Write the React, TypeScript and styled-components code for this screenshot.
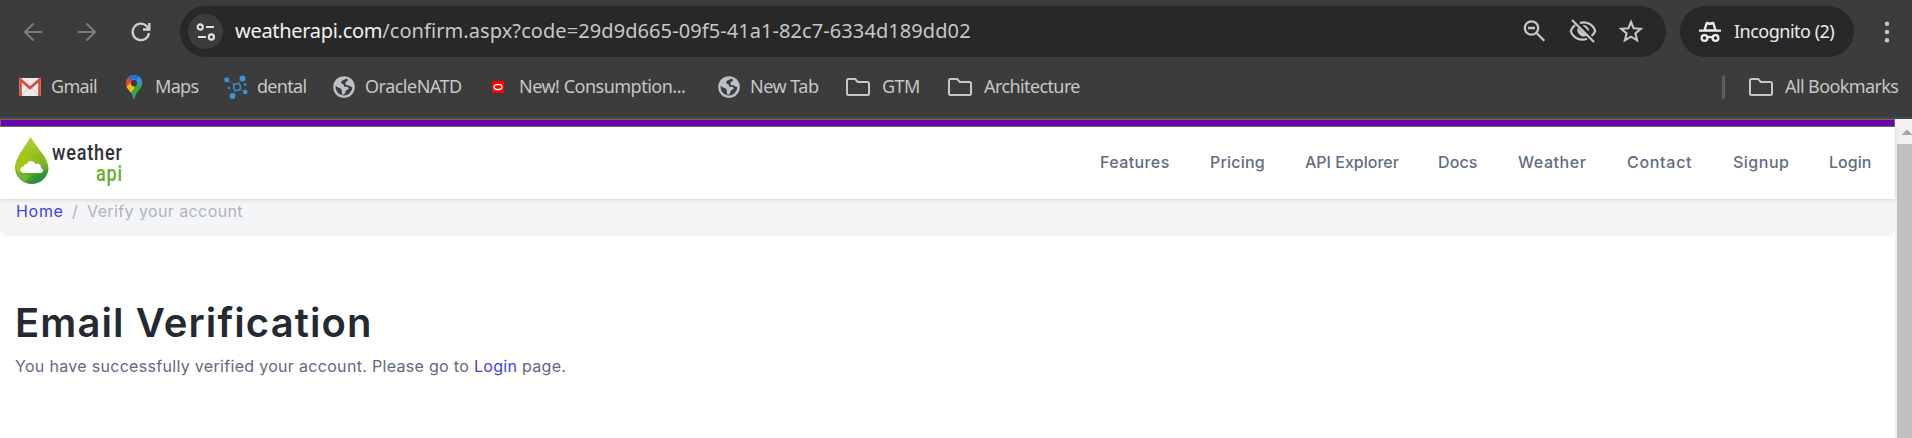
import React from 'react';
import styled, { createGlobalStyle } from 'styled-components';

const Global = createGlobalStyle`
  * { box-sizing: border-box; }
  body { margin: 0; background: #fff; overflow: hidden; }
  svg { display: block; flex: none; }
`;
const ui = `'Noto Sans', 'Open Sans', sans-serif`;
const web = `Inter, 'Liberation Sans', sans-serif`;

const Screen = styled.div`
  width: 1912px; height: 438px; display: flex; flex-direction: column; overflow: hidden;
`;
const Chrome = styled.header`
  height: 119px; background: #3c3c3c; border-bottom: 2px solid #474747; font-family: ${ui}; flex: none;
`;
const Toolbar = styled.div`
  height: 63px; display: flex; align-items: center; padding-left: 21px;
`;
const NavButtons = styled.div`
  display: flex; gap: 30px; width: 159px;
`;
const AddressBar = styled.div`
  width: 1486px; height: 51px; border-radius: 26px; background: #282828;
  display: flex; align-items: center; padding: 0 21px 0 8px;
`;
const SiteInfo = styled.div`
  width: 35px; height: 35px; border-radius: 50%; background: #3c3c3c;
  display: grid; place-items: center; margin-right: 12px;
`;
const Text = styled.span<{ $w: number; $s?: number; $ls?: number; $c?: string }>`
  display: inline-block; flex: none; white-space: nowrap; width: ${p => p.$w}px;
  font-size: ${p => p.$s ?? 18}px; letter-spacing: ${p => p.$ls ?? 0}px; color: ${p => p.$c ?? '#c7c7c7'};
  padding-bottom: 2px;
`;
const Host = styled.b`font-weight: 400; color: #f2f2f2; letter-spacing: -0.3px;`;
const BarActions = styled.div`display: flex; align-items: center; gap: 20px; margin-left: auto; padding-bottom: 1px;`;
const Incognito = styled.div`
  width: 174px; height: 51px; border-radius: 26px; background: #282828; margin-left: 14px;
  display: flex; align-items: center; padding-left: 18px; gap: 12px;
`;
const Menu = styled.div`margin-left: 29px;`;
const Bookmarks = styled.div`height: 48px; display: flex; align-items: center; padding-left: 18px;`;
const Bookmark = styled.div<{ $w: number; $gap?: number }>`
  display: flex; align-items: center; width: ${p => p.$w}px; gap: ${p => p.$gap ?? 10}px; flex: none;
`;
const Divider = styled.div`width: 3px; height: 24px; border-radius: 2px; background: #5e5e5e; margin-left: auto; margin-right: 24px;`;

const Viewport = styled.div`display: flex; flex: 1; min-height: 0;`;
const Page = styled.main`width: 1895px; background: #fff; font-family: ${web}; color: #5f6980;`;
const Banner = styled.div`height: 8px; background: #6a06a4; border: 1px solid #71696d;`;
const SiteHeader = styled.div`
  height: 72px; display: flex; align-items: center; background: #fff; position: relative;
  padding-left: 14px; box-shadow: 0 1px 4px rgba(0,0,0,.14);
`;
const SiteNav = styled.nav`display: flex; margin-left: auto; gap: 40px; padding-right: 23px; font-weight: 500;`;
const Crumbs = styled.div`
  height: 37px; background: #f4f5f7; border-radius: 0 0 6px 6px; padding: 0 0 0 16px; display: flex;
  font-size: 16px; line-height: 24px;
`;
const Title = styled.h1`
  margin: 59px 0 0 15px; height: 56px; font-size: 40px; line-height: 56px; font-weight: 600; color: #252a32;
  letter-spacing: 1.1px; white-space: nowrap;
`;
const Message = styled.p`margin: 3px 0 0 15px; font-size: 16px; line-height: 24px; letter-spacing: 0.31px; white-space: nowrap;`;
const Link = styled.span`color: #4042e2;`;
const Scrollbar = styled.div`width: 17px; background: #f1f1f1; padding-top: 10px; display: flex; flex-direction: column;`;
const Thumb = styled.div`margin: 9px 0 0 2px; flex: 1; background: #c1c1c1;`;

const Arrow = ({ flip }: { flip?: boolean }) => (
  <svg width="24" height="24" viewBox="0 0 24 24" fill="none" stroke="#7d7d7d" strokeWidth="2" transform={flip ? 'scale(-1 1)' : undefined}>
    <path d="M21 12H4M12.5 3.5L4 12l8.500 8.500" />
  </svg>
);
const Reload = () => (
  <svg width="24" height="24" viewBox="0 0 24 24" fill="none" stroke="#cfcfcf" strokeWidth="2.300">
    <path d="M20 13a8.200 8.200 0 1 1-2.400-7l2.400 2.600M20.300 3v6.500H14" />
  </svg>
);
const Tune = () => (
  <svg width="20" height="18" viewBox="0 0 20 18" fill="none" stroke="#e2e2e2" strokeWidth="2.100">
    <circle cx="4.200" cy="4" r="2.600" /><path d="M10 4h8M2 14h8" /><circle cx="15.400" cy="14" r="2.600" />
  </svg>
);
const ZoomOut = () => (
  <svg width="28" height="28" viewBox="0 0 28 28" fill="none" stroke="#c7c7c7" strokeWidth="2.300">
    <circle cx="10.500" cy="11" r="6.700" /><path d="M15.300 15.800l8 8M7 11h7" />
  </svg>
);
const EyeOff = () => (
  <svg width="28" height="28" viewBox="0 0 28 28" fill="none" stroke="#c7c7c7" strokeWidth="2.200">
    <path d="M11 6a12 12 0 0 1 15.200 8 13 13 0 0 1-3.500 5M18 21.700A12 12 0 0 1 1.800 14 12 12 0 0 1 6 8.200M3 3l22 22" />
    <path d="M14 8.500c3.500 0 5.600 2.300 5.500 5.500M9 11.500a6 6 0 0 0 8 7.200z" fill="#c7c7c7" strokeWidth="1" />
  </svg>
);
const Star = () => (
  <svg width="28" height="28" viewBox="0 0 28 28" fill="none" stroke="#c7c7c7" strokeWidth="2.100" strokeLinejoin="miter">
    <path d="M14 5l2.600 6.200 7.200.6-5.400 4.600 1.700 7-6.100-3.700-6.100 3.700 1.700-7-5.400-4.600 7.200-.6z" />
  </svg>
);
const Spy = () => (
  <svg width="24" height="24" viewBox="0 0 24 24">
    <path d="M1 9.600h4.500L7.500 3q.6-1.700 2.300-1.200l2.200.7 2.200-.7q1.700-.5 2.300 1.200l2 6.600H23v2.200H1z" fill="#ececec" />
    <path d="M8 9.200l1.500-4.700 2.500.7 2.500-.7L16 9.200z" fill="#282828" />
    <g fill="none" stroke="#ececec" strokeWidth="2.200"><circle cx="6.500" cy="18" r="2.900" /><circle cx="17.500" cy="18" r="2.900" /><path d="M9.400 17.500q2.600-1.300 5.200 0" /></g>
  </svg>
);
const Dots = () => (
  <svg width="8" height="24" viewBox="0 0 8 24" fill="#c7c7c7">
    <circle cx="4" cy="3.800" r="2.200" /><circle cx="4" cy="12" r="2.200" /><circle cx="4" cy="20.200" r="2.200" />
  </svg>
);
const Gmail = () => (
  <svg width="24" height="24" viewBox="0 0 24 24">
    <rect x="1" y="3" width="22" height="18" rx="2" fill="#eceaea" />
    <path d="M4 20l6-7M20 20l-6-7" stroke="#cfcaca" />
    <path d="M2.500 21V4.700L12 13l9.500-8.300V21" fill="none" stroke="#d54b3d" strokeWidth="2.600" />
  </svg>
);
const MapsPin = () => (
  <svg width="24" height="26" viewBox="0 0 24 26">
    <clipPath id="pin"><path d="M12 1a8.200 8.200 0 0 0-8.200 8.200c0 6 6.500 8 7.400 14.700.2 1.500 1.400 1.500 1.600 0C13.700 17.200 20.200 15.200 20.200 9.200A8.200 8.200 0 0 0 12 1z" /></clipPath>
    <g clipPath="url(#pin)">
      <rect width="24" height="26" fill="#34a853" />
      <path d="M0 0h24v4L12 9 5.500 4z" fill="#1a73e8" /><path d="M0 3l5-1 7 7-6 7-6-4z" fill="#ea4335" />
      <path d="M4 13.500l8-8.500 3.500 6.500L7.500 20z" fill="#fbbc04" /><path d="M12 9l6-7 5 8-6 1-5 6z" fill="#34a853" /><path d="M12 9l6-7 2.300 7z" fill="#4285f4" />
    </g>
    <circle cx="12" cy="9.200" r="3.100" fill="#3c3c3c" />
  </svg>
);
const Molecule = () => (
  <svg width="24" height="24" viewBox="0 0 24 24" fill="#3498db" stroke="#3498db">
    <path d="M3 5l7 5M18 4l-4 5M9 20l2-4M21 17l-5-3" strokeWidth="1" strokeDasharray="2 1" />
    <circle cx="13" cy="12" r="3.400" fill="none" strokeWidth="1.400" />
    <g stroke="none"><circle cx="2.700" cy="4.700" r="2.500" /><circle cx="18.500" cy="3.500" r="3" /><circle cx="8.500" cy="21" r="2.900" /><circle cx="21.300" cy="17" r="2.300" /><circle cx="5" cy="13" r="1.200" /><circle cx="21" cy="9.500" r="1.300" /></g>
  </svg>
);
const Globe = () => (
  <svg width="22" height="22" viewBox="0 0 22 22">
    <circle cx="11" cy="11" r="10.800" fill="#bdc1c6" />
    <path d="M13 2.500c-1 1.600-4.700 1.500-4.700 4 0 2 2.700 1.200 2.700 3.200s2.500.6 4 1.500c1.500 1 .5 2.500-1.200 2.700-1.800.4-.6 3.600-3.600 4.900-2-.4-.8-3.800-1.800-5.500C7.300 11.700 4.500 12 2.600 9.800A8.500 8.500 0 0 0 10 19.400 8.500 8.500 0 0 0 19.400 11c-1.500.5-2-1-3.600-1.400C14 9.200 12 9 12.300 7.300S15 5.500 14.900 3.400z" fill="#3c3c3c" />
  </svg>
);
const Oracle = () => (
  <svg width="12" height="12" viewBox="0 0 12 12"><rect width="12" height="12" fill="#f00" /><rect x="2" y="3.700" width="8" height="4.800" rx="2.400" fill="none" stroke="#fff" strokeWidth="1.300" /></svg>
);
const Folder = () => (
  <svg width="24" height="18" viewBox="0 0 24 18" fill="none" stroke="#c7c7c7" strokeWidth="2"><path d="M2.500 1h6.700l2.600 3h9.700q1.500 0 1.500 1.500v10q0 1.500-1.500 1.500h-19Q1 17 1 15.500v-13Q1 1 2.500 1z" /></svg>
);

const Wordmark = styled.div`
  width: 71px; margin: 4px 0 0 3px; font-family: Roboto, sans-serif; font-weight: 500; font-size: 22px; line-height: 21px;
`;
const Word = styled.span<{ $green?: boolean }>`
  display: block; width: max-content; margin-left: ${p => (p.$green ? 'auto' : 0)}; letter-spacing: 1px;
  transform: scaleX(.82); transform-origin: ${p => (p.$green ? 'right' : 'left')};
  color: ${p => (p.$green ? '#66ae27' : '#303236')};
`;
const Logo = styled.div`display: flex; align-items: center; padding-bottom: 5px;`;
const Drop = () => (
  <svg width="35" height="50" viewBox="0 0 35 50">
    <defs>
      <linearGradient id="leaf" x1="0.4" y1="0" x2="0.65" y2="1"><stop stopColor="#b9cf2b" /><stop offset=".55" stopColor="#8cbd22" /><stop offset=".8" stopColor="#4da22c" /><stop offset="1" stopColor="#17803b" /></linearGradient>
      <clipPath id="drop"><path d="M16.500 1C11 11 1 22 1 32.500a16.800 16.800 0 0 0 33.500 0C34.500 22 22 11 16.500 1z" /></clipPath>
    </defs>
    <g clipPath="url(#drop)">
      <rect width="35" height="50" fill="url(#leaf)" />
      <path d="M0 14l17 6L5 38l-5-8z" fill="#a8c90e" opacity=".7" /><path d="M18 20l17-6v18L26 25z" fill="#86b52c" opacity=".6" />
      <path d="M2 38l14 1-6 10z" fill="#73bb2d" opacity=".7" /><path d="M16 40l19-6-8 14z" fill="#249044" opacity=".6" />
    </g>
    <path d="M10 37q-3.700-.2-3.700-3.300 0-3 3.400-3.300.2-2.600 3-2.400 1.200-3.200 4.500-3 3 .2 4 3 3-1.400 4.900.8 1.200 1.500.7 3.200 2.200.5 2.200 2.500 0 2.300-2.700 2.500z" fill="#fff" />
  </svg>
);

const links: [string, number, number][] = [
  ['Features', 70, 0.4], ['Pricing', 55, 0.2], ['API Explorer', 93, 0], ['Docs', 40, 0.1],
  ['Weather', 69, 0.55], ['Contact', 66, 0.7], ['Signup', 56, 0.5], ['Login', 43, 0],
];

export default function App() {
  return (
    <Screen>
      <Global />
      <Chrome>
        <Toolbar>
          <NavButtons><Arrow /><Arrow flip /><Reload /></NavButtons>
          <AddressBar>
            <SiteInfo><Tune /></SiteInfo>
            <Text $w={760} $s={20} $ls={0.08}><Host>weatherapi.com</Host>/confirm.aspx?code=29d9d665-09f5-41a1-82c7-6334d189dd02</Text>
            <BarActions><ZoomOut /><EyeOff /><Star /></BarActions>
          </AddressBar>
          <Incognito><Spy /><Text $w={105} $ls={-0.5} $c="#ececec">Incognito (2)</Text></Incognito>
          <Menu><Dots /></Menu>
        </Toolbar>
        <Bookmarks>
          <Bookmark $w={104} $gap={9}><Gmail /><Text $w={48} $ls={-0.7}>Gmail</Text></Bookmark>
          <Bookmark $w={102} $gap={9}><MapsPin /><Text $w={45} $ls={-0.7}>Maps</Text></Bookmark>
          <Bookmark $w={109} $gap={9}><Molecule /><Text $w={52} $ls={-0.7}>dental</Text></Bookmark>
          <Bookmark $w={159}><Globe /><Text $w={100} $ls={-0.5}>OracleNATD</Text></Bookmark>
          <Bookmark $w={226} $gap={15}><Oracle /><Text $w={168} $ls={-0.5}>New! Consumption...</Text></Bookmark>
          <Bookmark $w={128}><Globe /><Text $w={70} $ls={-0.5}>New Tab</Text></Bookmark>
          <Bookmark $w={102} $gap={12}><Folder /><Text $w={40} $ls={-0.6}>GTM</Text></Bookmark>
          <Bookmark $w={150} $gap={12}><Folder /><Text $w={100} $ls={-0.6}>Architecture</Text></Bookmark>
          <Divider />
          <Bookmark $w={163} $gap={12}><Folder /><Text $w={116} $ls={-0.6}>All Bookmarks</Text></Bookmark>
        </Bookmarks>
      </Chrome>
      <Viewport>
        <Page>
          <Banner />
          <SiteHeader>
            <Logo>
              <Drop />
              <Wordmark><Word>weather</Word><Word $green>api</Word></Wordmark>
            </Logo>
            <SiteNav>{links.map(([t, w, ls]) => <Text key={t} $w={w} $s={16} $ls={ls} $c="#626c82">{t}</Text>)}</SiteNav>
          </SiteHeader>
          <Crumbs>
            <Text $w={56} $s={16} $ls={0.7} $c="#4042e2">Home</Text><Text $w={15} $s={16} $c="#a9b0bd">/</Text><Text $w={160} $s={16} $ls={0.4} $c="#adb3bf">Verify your account</Text>
          </Crumbs>
          <Title>Email Verification</Title>
          <Message>You have successfully verified your account. Please go to <Link>Login</Link> page.</Message>
        </Page>
        <Scrollbar>
          <svg width="17" height="6" viewBox="0 0 17 6"><path d="M6.500 6L12 0.500 17.500 6z" fill="#a3a3a3" /></svg>
          <Thumb />
        </Scrollbar>
      </Viewport>
    </Screen>
  );
}
